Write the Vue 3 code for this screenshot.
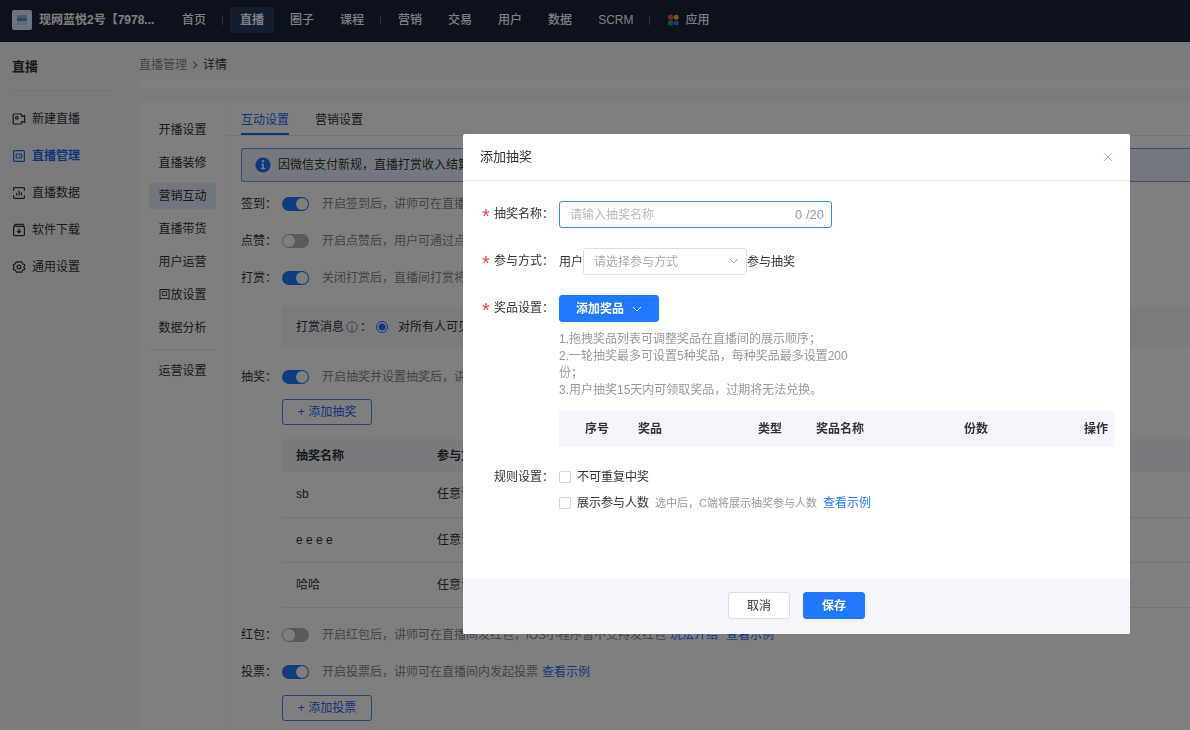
<script setup>
import { ref } from 'vue'

const navGroups = [
  ['首页'],
  ['直播', '圈子', '课程'],
  ['营销', '交易', '用户', '数据', 'SCRM'],
]
const sideItems = [
  { label: '新建直播', icon: 'camera' },
  { label: '直播管理', icon: 'manage', active: true },
  { label: '直播数据', icon: 'data' },
  { label: '软件下载', icon: 'download' },
  { label: '通用设置', icon: 'gear' },
]
const subItems = ['开播设置', '直播装修', '营销互动', '直播带货', '用户运营', '回放设置', '数据分析']
const topRows = ref([
  { id: 'sign', label: '签到', on: true, desc: '开启签到后，讲师可在直播' },
  { id: 'like', label: '点赞', on: false, desc: '开启点赞后，用户可通过点' },
  { id: 'reward', label: '打赏', on: true, desc: '关闭打赏后，直播间打赏将' },
])
const lotteryOn = ref(true)
const packetOn = ref(false)
const voteOn = ref(true)
const lotteries = ['sb', 'e e e e', '哈哈']
const name = ref('')
const mode = ref('')
const noRepeat = ref(false)
const showCount = ref(false)
</script>

<template>
  <div class="page">
    <header class="topbar">
      <div class="brand">
        <span class="logo">
          <svg width="12" height="12" viewBox="0 0 12 12">
            <rect x="1" y="1" width="10" height="3" rx="1" fill="#8fb2ee" />
            <rect x="1" y="4" width="10" height="3" fill="#5b8fe6" />
            <rect x="1" y="7" width="10" height="4" rx="1" fill="#bcd0f4" />
          </svg>
        </span>
        <span>现网蓝悦2号【7978...</span>
      </div>
      <nav class="nav">
        <template v-for="(group, g) in navGroups" :key="g">
          <a v-for="item in group" :key="item" href="#" :class="{ active: item === '直播' }">{{ item }}</a>
          <span class="sep"></span>
        </template>
        <a href="#" class="apps">
          <svg width="12" height="12" viewBox="0 0 12 12">
            <circle cx="3.6" cy="3.2" r="2.7" fill="#f0503c" />
            <circle cx="9.2" cy="3.2" r="2.5" fill="#f5b914" />
            <circle cx="3.6" cy="8.9" r="2.7" fill="#22ac55" />
            <circle cx="9.2" cy="8.9" r="2.5" fill="#2f7bf5" />
          </svg>
          应用
        </a>
      </nav>
    </header>

    <div class="body">
      <aside class="side">
        <h1>直播</h1>
        <a v-for="item in sideItems" :key="item.label" href="#" :class="{ active: item.active }">
          <svg width="14" height="14" viewBox="0 0 14 14" fill="none" stroke="currentColor" stroke-width="1.2">
            <g v-if="item.icon === 'camera'">
              <path d="M9.6 4.4V2.8a.8.8 0 0 0-.8-.8H2a.8.8 0 0 0-.8.8v8.4a.8.8 0 0 0 .8.8h6.8a.8.8 0 0 0 .8-.8V9.6" />
              <circle cx="4.8" cy="5.8" r="1.3" />
              <path d="M9.6 4.6l3-1v6.8l-3-1" />
            </g>
            <g v-else-if="item.icon === 'manage'">
              <rect x="1.6" y="1.6" width="10.8" height="10.8" rx="1" />
              <rect x="4.2" y="5" width="5.6" height="4" rx="0.6" />
              <path d="M7.6 6.4v1.4" />
            </g>
            <g v-else-if="item.icon === 'data'">
              <path d="M1.6 4.8V2.4a.8.8 0 0 1 .8-.8h9.2a.8.8 0 0 1 .8.8v2.4M1.6 9.2v2.4a.8.8 0 0 0 .8.8h9.2a.8.8 0 0 0 .8-.8V9.2M4.6 9.4V7M7 9.4V4.6M9.4 9.4V6.2" />
            </g>
            <g v-else-if="item.icon === 'download'">
              <rect x="1.6" y="3.4" width="10.8" height="9.2" rx="1" />
              <path d="M2 3.4 3 1.4h8l1 2M7 5.4v4.4M4.9 7.8 7 9.9l2.1-2.1" />
            </g>
            <g v-else>
              <path d="M4.3 1.8h5.4l.9 1.9 2 .9v1.3l-.8 1.1.8 1.1v1.3l-2 .9-.9 1.9H4.3l-.9-1.9-2-.9V8.1L2.2 7l-.8-1.1V4.6l2-.9z" />
              <circle cx="7" cy="7" r="1.9" />
            </g>
          </svg>
          {{ item.label }}
        </a>
      </aside>

      <main class="main">
        <div class="crumb">
          <a href="#">直播管理</a>
          <svg width="8" height="8" viewBox="0 0 8 8" fill="none" stroke="#777" stroke-width="1.1"><path d="M2.2.6 5.8 4 2.2 7.4" /></svg>
          <span>详情</span>
        </div>
        <div class="strip"></div>
        <div class="panel">
          <nav class="submenu">
            <a v-for="s in subItems" :key="s" href="#" :class="{ active: s === '营销互动' }">{{ s }}</a>
            <hr />
            <a href="#">运营设置</a>
          </nav>

          <section class="content">
            <div class="tabs">
              <a href="#" class="active">互动设置</a>
              <a href="#">营销设置</a>
            </div>
            <div class="settings">
              <div class="alert">
                <svg width="16" height="16" viewBox="0 0 16 16">
                  <circle cx="8" cy="8" r="7.6" fill="#1f6dff" />
                  <circle cx="8" cy="4.3" r="1.2" fill="#fff" />
                  <path d="M6.2 6.7h2.7v4.4h1.2v1.2H6v-1.2h1.2V7.9h-1z" fill="#fff" />
                </svg>
                因微信支付新规，直播打赏收入结算
              </div>

              <div v-for="r in topRows" :key="r.id" class="row">
                <label :for="r.id">{{ r.label }}：</label>
                <input :id="r.id" v-model="r.on" type="checkbox" class="switch" />
                <span class="desc">{{ r.desc }}</span>
              </div>

              <div class="subbox">
                <span>打赏消息</span>
                <svg width="12" height="12" viewBox="0 0 12 12" fill="none" stroke="#888">
                  <circle cx="6" cy="6" r="5.2" />
                  <path d="M6 2.8v1.2M6 5v3.8M4.8 8.8h2.4" />
                </svg>
                <span class="colon">：</span>
                <label class="radio"><input type="radio" name="visible" checked />对所有人可见</label>
              </div>

              <div class="row">
                <label for="lottery">抽奖：</label>
                <input id="lottery" v-model="lotteryOn" type="checkbox" class="switch" />
                <span class="desc">开启抽奖并设置抽奖后，讲</span>
              </div>
              <button type="button" class="add">+ 添加抽奖</button>
              <table class="list">
                <thead>
                  <tr><th class="first">抽奖名称</th><th>参与方式</th></tr>
                </thead>
                <tbody>
                  <tr v-for="l in lotteries" :key="l"><td>{{ l }}</td><td>任意课</td></tr>
                </tbody>
              </table>

              <div class="row">
                <label for="packet">红包：</label>
                <input id="packet" v-model="packetOn" type="checkbox" class="switch" />
                <span class="desc">开启红包后，讲师可在直播间发红包，iOS小程序暂不支持发红包</span>
                <a href="#">玩法介绍</a>
                <a href="#">查看示例</a>
              </div>
              <div class="row">
                <label for="vote">投票：</label>
                <input id="vote" v-model="voteOn" type="checkbox" class="switch" />
                <span class="desc">开启投票后，讲师可在直播间内发起投票</span>
                <a href="#">查看示例</a>
              </div>
              <button type="button" class="add">+ 添加投票</button>
            </div>
          </section>
        </div>
      </main>
    </div>

    <div class="mask">
      <form class="modal" role="dialog" aria-labelledby="dialog-title" @submit.prevent>
        <div class="modal-head">
          <h2 id="dialog-title">添加抽奖</h2>
          <button type="button" class="close" aria-label="关闭">
            <svg width="10" height="10" viewBox="0 0 10 10" stroke="#bbb" stroke-width="1"><path d="M.6.6l8.8 8.8M9.4.6.6 9.4" /></svg>
          </button>
        </div>

        <div class="modal-body">
          <div class="field">
            <label for="name" class="name"><b>*</b>抽奖名称：</label>
            <div class="counter">
              <input id="name" v-model="name" type="text" maxlength="20" placeholder="请输入抽奖名称" />
              <span>{{ name.length }} /20</span>
            </div>
          </div>

          <div class="field">
            <label for="mode" class="name"><b>*</b>参与方式：</label>
            <div class="inline">
              <span>用户</span>
              <span class="select">
                <select id="mode" v-model="mode">
                  <option value="">请选择参与方式</option>
                </select>
                <svg width="10" height="10" viewBox="0 0 10 10" fill="none" stroke="#aaa"><path d="M1 3l4 4 4-4" /></svg>
              </span>
              <span>参与抽奖</span>
            </div>
          </div>

          <div class="field">
            <span class="name"><b>*</b>奖品设置：</span>
            <div class="prize">
              <button type="button" class="primary prize-add">
                添加奖品
                <svg width="10" height="10" viewBox="0 0 10 10" fill="none" stroke="#fff"><path d="M1 3l4 4 4-4" /></svg>
              </button>
              <p class="hint">
                1.拖拽奖品列表可调整奖品在直播间的展示顺序；<br />
                2.一轮抽奖最多可设置5种奖品，每种奖品最多设置200份；<br />
                3.用户抽奖15天内可领取奖品，过期将无法兑换。
              </p>
              <table class="prizes">
                <thead>
                  <tr>
                    <th class="c-no">序号</th>
                    <th class="c-wide">奖品</th>
                    <th class="c-type">类型</th>
                    <th>奖品名称</th>
                    <th class="c-wide">份数</th>
                    <th class="c-op">操作</th>
                  </tr>
                </thead>
              </table>
            </div>
          </div>

          <div class="field rules">
            <span class="name">规则设置：</span>
            <div>
              <div class="rule">
                <label><input v-model="noRepeat" type="checkbox" class="check" />不可重复中奖</label>
              </div>
              <div class="rule">
                <label><input v-model="showCount" type="checkbox" class="check" />展示参与人数</label>
                <span class="note">选中后，C端将展示抽奖参与人数</span>
                <a href="#">查看示例</a>
              </div>
            </div>
          </div>
        </div>

        <div class="modal-foot">
          <button type="button" class="plain">取消</button>
          <button type="submit" class="primary">保存</button>
        </div>
      </form>
    </div>
  </div>
</template>

<style>
body {
  overflow: hidden;
}
</style>

<style scoped>
.page {
  min-height: 100vh;
  display: flex;
  flex-direction: column;
  background: #f5f7fb;
  color: #333;
  font: 12px/18px "Liberation Sans", "Noto Sans CJK SC", sans-serif;
}
.page *,
.page *::before {
  box-sizing: border-box;
}
a {
  color: #1f78ff;
  text-decoration: none;
}
button,
input,
select {
  font: inherit;
  margin: 0;
}
svg {
  flex: none;
}

.topbar {
  height: 42px;
  padding-bottom: 2px;
  display: flex;
  align-items: center;
  background: #182236;
  color: #fff;
}
.brand {
  width: 172px;
  padding-left: 12px;
  display: flex;
  align-items: center;
  gap: 7px;
  font-weight: bold;
  white-space: nowrap;
}
.logo {
  width: 20px;
  height: 20px;
  border-radius: 2px;
  background: #dce8fb;
  display: grid;
  place-items: center;
}
.nav {
  display: flex;
  align-items: center;
  gap: 6px;
}
.nav a {
  display: flex;
  align-items: center;
  gap: 6px;
  height: 26px;
  padding: 0 10px;
  border-radius: 3px;
  color: #fff;
  font-weight: 500;
}
.nav a.active {
  background: #283d66;
  font-weight: bold;
}
.sep {
  width: 1px;
  height: 9px;
  margin-right: 1px;
  background: #5b6475;
}

.body {
  flex: 1;
  display: flex;
}
.side {
  width: 139px;
  flex: none;
  padding: 10px 12px;
}
.side h1 {
  margin: 0 15px 9px 0;
  height: 39px;
  border-bottom: 1px solid #e8ebf0;
  font-size: 13px;
  line-height: 30px;
}
.side a {
  display: flex;
  align-items: center;
  gap: 6px;
  height: 37px;
  color: #333;
}
.side a.active {
  color: #2468f2;
  font-weight: bold;
}

.main {
  flex: 1;
  min-width: 0;
  display: flex;
  flex-direction: column;
}
.crumb {
  height: 37px;
  padding-top: 8px;
  display: flex;
  align-items: center;
  gap: 4px;
}
.crumb a {
  color: #888;
}
.strip {
  height: 10px;
  margin-bottom: 13px;
  background: #fff;
}
.panel {
  flex: 1;
  display: flex;
  background: #fff;
}
.submenu {
  width: 88px;
  padding: 15px 10px;
  border-right: 1px solid #f6f7f9;
  display: flex;
  flex-direction: column;
  gap: 7px;
}
.submenu a {
  width: 67px;
  height: 26px;
  line-height: 27px;
  border-radius: 2px;
  color: #333;
  text-align: center;
}
.submenu a.active {
  background: #e4eefc;
}
.submenu hr {
  width: 67px;
  margin: 1px 0;
  border: 0;
  border-top: 1px solid #e8eaee;
}

.content {
  flex: 1;
  min-width: 0;
}
.tabs {
  height: 34px;
  padding-left: 14px;
  border-bottom: 1px solid #e6e8ec;
  display: flex;
  gap: 26px;
}
.tabs a {
  height: 33px;
  line-height: 36px;
  color: #333;
}
.tabs a.active {
  color: #2468f2;
  border-bottom: 2px solid #1f6dff;
}
.settings {
  padding: 12px 0 0 14px;
}
.alert {
  height: 34px;
  margin-bottom: 3px;
  padding-left: 13px;
  border: 1px solid #6d9dff;
  border-right: 0;
  border-radius: 3px 0 0 3px;
  background: #ebf2ff;
  display: flex;
  align-items: center;
  gap: 7px;
}
.row {
  height: 37px;
  display: flex;
  align-items: center;
  gap: 4px;
  white-space: nowrap;
}
.row label {
  width: 37px;
}
.desc {
  padding-left: 9px;
  color: #888;
}
.row a {
  color: #1f6dff;
  padding-right: 4px;
}
.switch {
  appearance: none;
  width: 27px;
  height: 14px;
  padding: 1px;
  border-radius: 7px;
  background: #b4b4b4;
  display: flex;
}
.switch::before {
  content: "";
  width: 12px;
  height: 12px;
  border-radius: 6px;
  background: #fff;
}
.switch:checked {
  justify-content: flex-end;
  background: #1f78ff;
}
.subbox {
  height: 42px;
  margin: 10px 0 10px 41px;
  padding-left: 14px;
  background: #f4f6fb;
  display: flex;
  align-items: center;
  gap: 2px;
}
.colon {
  width: 14px;
}
.radio {
  display: flex;
  align-items: center;
  gap: 10px;
}
.radio input {
  appearance: none;
  width: 12px;
  height: 12px;
  border: 1px solid #1f6dff;
  border-radius: 6px;
  background: radial-gradient(circle, #1f6dff 3px, #fff 4px);
}
.add {
  display: block;
  width: 90px;
  height: 26px;
  margin: 4px 0 0 41px;
  padding: 0;
  border: 1px solid #4a86f7;
  border-radius: 3px;
  background: #fff;
  color: #2468f2;
}
.list {
  width: calc(100% - 41px);
  margin: 14px 0 9px 41px;
  border-collapse: collapse;
  text-align: left;
}
.list th {
  height: 33px;
  padding: 0 14px;
  background: #f2f5fa;
}
.list td {
  height: 45px;
  padding: 0 14px;
  border-bottom: 1px solid #e6e8ec;
}
.list .first {
  width: 141px;
}

.mask {
  position: fixed;
  inset: 0;
  padding: 134px 60px 96px 463px;
  background: rgba(0, 0, 0, 0.5);
  display: flex;
  align-items: flex-start;
}
.modal {
  flex: 1;
  border-radius: 2px;
  background: #fff;
  overflow: hidden;
}
.modal-head {
  height: 47px;
  padding: 0 17px;
  border-bottom: 1px solid #e8eaee;
  display: flex;
  align-items: center;
  justify-content: space-between;
}
.modal-head h2 {
  margin: 0;
  font-size: 13px;
  font-weight: normal;
}
.close {
  padding: 0;
  border: 0;
  background: none;
  display: flex;
}
.modal-body {
  padding: 20px 16px 63px;
}
.field {
  display: flex;
  margin-bottom: 20px;
}
.name {
  width: 80px;
  flex: none;
  line-height: 27px;
  display: flex;
  justify-content: flex-end;
  padding-right: 5px;
}
.name b {
  width: 12px;
  color: #e5484d;
  font-size: 20px;
  font-weight: normal;
  line-height: 30px;
  height: 27px;
}
.counter {
  width: 273px;
  height: 27px;
  padding: 0 7px 0 10px;
  border: 1px solid #3d86e0;
  border-radius: 3px;
  display: flex;
  align-items: center;
  color: #999;
}
.counter input {
  flex: 1;
  min-width: 0;
  padding: 0;
  border: 0;
  outline: 0;
  color: #333;
}
.counter span {
  font-size: 13px;
}
.counter input::placeholder {
  color: #b8b8b8;
}
.inline {
  display: flex;
  align-items: center;
}
.select {
  position: relative;
  display: flex;
}
.select select {
  appearance: none;
  width: 164px;
  height: 27px;
  padding: 0 10px;
  border: 1px solid #dcdfe6;
  border-radius: 3px;
  background: #fff;
  color: #aaa;
}
.select svg {
  position: absolute;
  top: 8px;
  right: 8px;
  pointer-events: none;
}
.primary,
.plain {
  width: 62px;
  height: 27px;
  padding: 0;
  border: 1px solid #1f78ff;
  border-radius: 3px;
  background: #1f78ff;
  color: #fff;
  font-weight: bold;
}
.plain {
  border-color: #dcdfe6;
  background: #fff;
  color: #333;
  font-weight: normal;
}
.prize {
  flex: 1;
}
.prize-add {
  width: 100px;
  display: flex;
  align-items: center;
  justify-content: center;
  gap: 8px;
}
.hint {
  max-width: 296px;
  margin: 9px 0 12px;
  color: #999;
  line-height: 17px;
}
.prizes {
  width: 100%;
  border-collapse: collapse;
  table-layout: fixed;
  text-align: left;
}
.prizes th {
  height: 36px;
  padding: 0 0 0 8px;
  background: #f4f6fb;
  white-space: nowrap;
}
.prizes .c-no {
  width: 71px;
  padding-left: 26px;
}
.prizes .c-wide {
  width: 120px;
}
.prizes .c-type {
  width: 58px;
}
.prizes .c-op {
  width: 38px;
}
.field.rules {
  margin: -3px 0 0;
}
.rule {
  height: 26px;
  display: flex;
  align-items: center;
  gap: 6px;
}
.rule label {
  display: flex;
  align-items: center;
  gap: 6px;
}
.check {
  appearance: none;
  width: 12px;
  height: 12px;
  border: 1px solid #d5d8de;
  border-radius: 1px;
  background: #fff;
}
.note {
  color: #999;
  font-size: 11px;
}
.modal-foot {
  height: 55px;
  padding-bottom: 2px;
  background: #f4f6fb;
  display: flex;
  align-items: center;
  justify-content: center;
  gap: 13px;
}
</style>
